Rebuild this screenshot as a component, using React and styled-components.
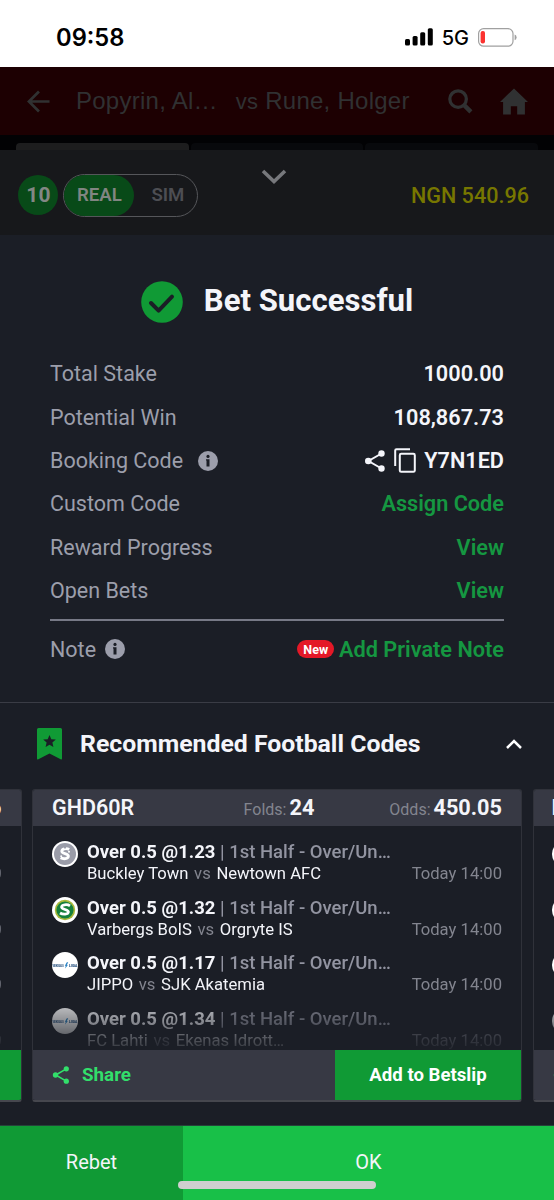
import React from 'react'
import styled, { createGlobalStyle } from 'styled-components'

const rows = [
  { label: 'Total Stake', value: '1000.00' },
  { label: 'Potential Win', value: '108,867.73' },
  { label: 'Booking Code', value: 'Y7N1ED', info: true, icons: true },
  { label: 'Custom Code', value: 'Assign Code', link: true },
  { label: 'Reward Progress', value: 'View', link: true },
  { label: 'Open Bets', value: 'View', link: true }
]

const picks = [
  { odd: '1.23', home: 'Buckley Town', away: 'Newtown AFC', logo: 'grey' },
  { odd: '1.32', home: 'Varbergs BoIS', away: 'Orgryte IS', logo: 'green' },
  { odd: '1.17', home: 'JIPPO', away: 'SJK Akatemia', logo: 'liiga' },
  { odd: '1.34', home: 'FC Lahti', away: 'Ekenas Idrott…', logo: 'liiga' }
]

const ShareIcon = ({ size }) => (
  <svg width={size} height={size} viewBox='0 0 20 22' fill='currentColor'>
    <path d='M16.5 3.5 3.5 11l13 7.5' fill='none' stroke='currentColor' strokeWidth='2' />
    <circle cx='16.5' cy='3.5' r='3.2' />
    <circle cx='3.3' cy='11' r='3.3' />
    <circle cx='16.5' cy='18.5' r='3.2' />
  </svg>
)

const CopyIcon = () => (
  <svg width='22' height='25' viewBox='0 0 22 25' fill='none' stroke='currentColor' strokeWidth='2'>
    <path d='M1.2 18V2.5Q1.2 1.2 2.5 1.2H16' />
    <rect x='5.8' y='5.8' width='15' height='18' rx='1.4' />
  </svg>
)

const InfoIcon = () => (
  <svg width='20' height='20' viewBox='0 0 20 20'>
    <circle cx='10' cy='10' r='10' fill='#9c9eab' />
    <circle cx='10' cy='5.4' r='1.6' fill='#1b1e26' />
    <path d='M8 8.2h3.5v7.2h-3V9.6H8z' fill='#1b1e26' />
  </svg>
)

const LeagueLogo = ({ type }) => (
  <svg width='26' height='26' viewBox='0 0 26 26'>
    <circle cx='13' cy='13' r='13' fill='#fff' />
    {type === 'grey' && (
      <g>
        <circle cx='13' cy='13' r='11' fill='#9a9ca8' />
        <path d='M17.2 8.4c-3-1.6-7.6-.6-7.4 2 .2 2.6 6.8 1.8 6.6 4.8-.2 2.8-5 3.2-7.8 1.6' fill='none' stroke='#fff' strokeWidth='2.8' />
        <circle cx='13' cy='6.6' r='1.1' fill='#9a9ca8' />
        <circle cx='9.2' cy='15.2' r='1' fill='#fff' />
        <circle cx='17' cy='10.8' r='1' fill='#fff' />
      </g>
    )}
    {type === 'green' && (
      <g>
        <circle cx='13' cy='13' r='10.2' fill='#a9b83a' />
        <circle cx='13' cy='13' r='8.6' fill='#16803c' />
        <path d='M18 8.8c-2.6-1.8-8.6-1.4-8.4 1.4.2 2.6 7 2 6.8 4.8-.2 2.6-5.6 2.8-8.4 1' fill='none' stroke='#fff' strokeWidth='2.8' />
      </g>
    )}
    {type === 'liiga' && (
      <g fill='#25507f'>
        <text x='.6' y='14.6' fontSize='3.4' fontWeight='900' textLength='11' lengthAdjust='spacingAndGlyphs'>VEIKKAUS</text>
        <path d='m14.6 10.4 1.6-.4-1.2 3 .8.2-2.8 3.2.7-2.5-.8-.2z' fill='#2f86c6' />
        <text x='17' y='14.6' fontSize='3.4' fontWeight='900' textLength='8.4' lengthAdjust='spacingAndGlyphs'>LIIGA</text>
      </g>
    )}
  </svg>
)

const StatusBar = () => (
  <Status>
    <Clock>09:58</Clock>
    <Signals>
      <svg width='28' height='18' viewBox='0 0 28 18'>
        <rect x='0' y='11' width='5' height='6.6' rx='1.5' />
        <rect x='7.6' y='8' width='5' height='9.6' rx='1.5' />
        <rect x='15.2' y='4.2' width='5' height='13.4' rx='1.5' />
        <rect x='22.8' y='.2' width='5' height='17.4' rx='1.5' />
      </svg>
      <Network>5G</Network>
      <svg width='39' height='19' viewBox='0 0 39 19'>
        <rect x='.6' y='.6' width='34.4' height='17.6' rx='5' fill='none' stroke='#a0a0a0' strokeWidth='1.2' />
        <rect x='2.6' y='3' width='4.4' height='12.6' rx='2' fill='#fb3230' />
        <path d='M36.6 6.6q2 .8 2 2.8t-2 2.8z' fill='#a0a0a0' />
      </svg>
    </Signals>
  </Status>
)

const CodeCard = () => (
  <Card>
    <CardHead>
      <Code>GHD60R</Code>
      <Stat>
        Folds: <b>24</b>
      </Stat>
      <Stat>
        Odds: <b>450.05</b>
      </Stat>
    </CardHead>
    <Picks>
      {picks.map((item, index) => (
        <Pick key={index}>
          <LeagueLogo type={item.logo} />
          <div className='info'>
            <Market>
              <b>Over 0.5 @{item.odd}</b> | 1st Half - Over/Un…
            </Market>
            <Teams>
              <p>
                {item.home} <i>vs</i> {item.away}
              </p>
              <span>Today 14:00</span>
            </Teams>
          </div>
        </Pick>
      ))}
    </Picks>
    <CardFoot>
      <Share>
        <ShareIcon size={18} />
        Share
      </Share>
      <AddButton>Add to Betslip</AddButton>
    </CardFoot>
  </Card>
)

// edge of the previous card in the carousel
const PrevCard = () => (
  <PrevPeek>
    <CardHead>
      <Stat>
        <b>6</b>
      </Stat>
    </CardHead>
    <Picks>
      {picks.map((item, index) => (
        <Pick key={index}>
          <Teams>
            <span>0</span>
          </Teams>
        </Pick>
      ))}
    </Picks>
    <CardFoot>
      <AddButton />
    </CardFoot>
  </PrevPeek>
)

// edge of the next card in the carousel
const NextCard = () => (
  <NextPeek>
    <CardHead>
      <Code>B</Code>
    </CardHead>
    <Picks>
      {picks.map((item, index) => (
        <Pick key={index}>
          <LeagueLogo />
        </Pick>
      ))}
    </Picks>
    <CardFoot>
      <Share>
        <ShareIcon size={18} />
      </Share>
    </CardFoot>
  </NextPeek>
)

const App = () => (
  <Page>
    <GlobalStyle />
    <StatusBar />
    <NavBar>
      <svg width='23' height='23' viewBox='0 0 24 24' fill='none' stroke='currentColor' strokeWidth='2.8'>
        <path d='M12.5 1.5 2 12l10.5 10.5M2 12h21.5' />
      </svg>
      <Match>
        <span className='home'>Popyrin, Al…</span>
        <span className='vs'>vs</span>
        <span className='away'>Rune, Holger</span>
      </Match>
      <svg width='25' height='25' viewBox='0 0 26 26' fill='none' stroke='currentColor'>
        <circle cx='10.5' cy='10.5' r='8.6' strokeWidth='3.4' />
        <path d='m16.8 16.8 7 7' strokeWidth='4.6' />
      </svg>
      <svg className='house' width='28' height='27' viewBox='0 0 29 27' fill='currentColor'>
        <path d='M14.5 0 29 14h-3.2v13h-8v-8.5h-6.6V27h-8V14H0z' />
      </svg>
    </NavBar>
    <Tabs>
      <Tab $on />
      <Tab />
      <Tab />
    </Tabs>
    <SlipHead>
      <Count>10</Count>
      <Switch>
        <Mode $on>REAL</Mode>
        <Mode>SIM</Mode>
      </Switch>
      <svg className='down' width='26' height='16' viewBox='0 0 26 16' fill='none' stroke='#77787c' strokeWidth='3.6'>
        <path d='m2 2 11 10.5L24 2' />
      </svg>
      <Balance>NGN 540.96</Balance>
    </SlipHead>
    <Title>
      <svg width='42' height='42' viewBox='0 0 42 42'>
        <circle cx='21' cy='21' r='20.8' fill='#109a35' />
        <path d='m10 22 7.6 7.6L31 15.6' fill='none' stroke='#1b1e26' strokeWidth='4' strokeLinecap='round' strokeLinejoin='round' />
      </svg>
      <span>Bet Successful</span>
    </Title>
    <Details>
      {rows.map((item, index) => (
        <Row key={index}>
          <Label $gap={15}>
            {item.label}
            {item.info && <InfoIcon />}
          </Label>
          <Value $link={item.link}>
            {item.icons && (
              <Actions>
                <ShareIcon size={22} />
                <CopyIcon />
              </Actions>
            )}
            {item.value}
          </Value>
        </Row>
      ))}
      <NoteRow>
        <Label $gap={9}>
          Note
          <InfoIcon />
        </Label>
        <Value $link>
          <Badge>New</Badge>
          Add Private Note
        </Value>
      </NoteRow>
    </Details>
    <Recommend>
      <svg width='25' height='32' viewBox='0 0 25 32'>
        <path d='M1.5 0h22Q25 0 25 1.5v29q0 1.4-1.4.8L12.5 25.6 1.4 31.3Q0 32 0 30.5v-29Q0 0 1.5 0z' fill='#109a35' />
        <path d='m12.5 7 1.8 4.2 4.5.4-3.4 3 1 4.4-3.9-2.3L8.6 19l1-4.4-3.4-3 4.5-.4z' fill='#1b1e26' />
      </svg>
      <h2>Recommended Football Codes</h2>
      <svg width='16' height='10' viewBox='0 0 16 10' fill='none' stroke='#fff' strokeWidth='2.5'>
        <path d='m1 9 7-7 7 7' />
      </svg>
    </Recommend>
    <Carousel>
      <PrevCard />
      <CodeCard />
      <NextCard />
    </Carousel>
    <Footer>
      <Rebet>Rebet</Rebet>
      <Ok>OK</Ok>
      <HomeBar />
    </Footer>
  </Page>
)

const GlobalStyle = createGlobalStyle`
  * {
    box-sizing: border-box;
  }
  body {
    margin: 0;
    background: #1b1e26;
  }
  p, h1, h2 {
    margin: 0;
  }
  svg {
    display: block;
    flex: none;
  }
`
const Page = styled.div`
  width: 554px;
  height: 1200px;
  display: flex;
  flex-direction: column;
  overflow: hidden;
  background: #1b1e26;
  color: #f4f5fa;
  font-family: Roboto, sans-serif;
  white-space: nowrap;
`
const Status = styled.div`
  height: 67px;
  flex: none;
  display: flex;
  justify-content: space-between;
  align-items: center;
  padding: 7px 37px 0 56px;
  background: #fff;
  color: #000;
  font-family: Inter, sans-serif;
`
const Clock = styled.div`
  font-size: 23.7px;
  font-weight: 600;
`
const Signals = styled.div`
  display: flex;
  align-items: center;
`
const Network = styled.span`
  margin: 2px 9px 0;
  font-size: 20px;
  font-weight: 450;
`
const NavBar = styled.div`
  height: 68px;
  flex: none;
  display: flex;
  align-items: center;
  padding: 0 26px 0 27px;
  background: #1d0002;
  color: #303132;
  .house {
    margin-left: 27px;
  }
`
const Match = styled.div`
  flex: 1;
  display: flex;
  align-items: baseline;
  margin-left: 26px;
  font-family: 'Liberation Sans', Arial, sans-serif;
  font-size: 24px;
  letter-spacing: 0.25px;
  .vs {
    margin: 0 7px 0 18px;
    font-size: 22px;
  }
`
const Tabs = styled.div`
  height: 15px;
  flex: none;
  display: flex;
  gap: 2px;
  padding: 8px 16px 0;
  background: #020204;
`
const Tab = styled.div`
  flex: 1;
  border-radius: 4px 4px 0 0;
  background: ${props => (props.$on ? '#1d1d1e' : '#08090c')};
`
const SlipHead = styled.div`
  height: 85px;
  flex: none;
  display: flex;
  align-items: center;
  padding: 5px 25px 0 18.4px;
  background: #17181b;
  .down {
    margin: -37px 0 0 63px;
  }
`
const Count = styled.div`
  width: 40px;
  height: 40px;
  display: flex;
  justify-content: center;
  align-items: center;
  border-radius: 50%;
  background: #084a18;
  color: #838784;
  font-size: 21px;
  font-weight: 700;
`
const Switch = styled.div`
  width: 135px;
  height: 43px;
  display: flex;
  margin-left: 5px;
  border: 1px solid #55565a;
  border-radius: 22px;
`
const Mode = styled.div`
  width: ${props => (props.$on ? '70px' : '63px')};
  display: flex;
  justify-content: center;
  align-items: center;
  padding-left: ${props => (props.$on ? '0' : '4px')};
  border-radius: 22px;
  background: ${props => (props.$on ? '#084a18' : 'transparent')};
  color: ${props => (props.$on ? '#818582' : '#4d4e53')};
  font-size: 18.6px;
  font-weight: 600;
`
const Balance = styled.div`
  margin-left: auto;
  color: #777700;
  font-size: 21.6px;
  font-weight: 500;
`
const Title = styled.h1`
  height: 117px;
  flex: none;
  display: flex;
  justify-content: center;
  align-items: center;
  gap: 21px;
  padding-top: 16px;
  font-size: 31.1px;
  font-weight: 700;
  span {
    padding-bottom: 3px;
  }
`
const Details = styled.div`
  height: 351px;
  flex: none;
  padding: 0.2px 50px 0;
  border-bottom: 1px solid #3a3c45;
`
const Row = styled.div`
  height: 43.35px;
  display: flex;
  justify-content: space-between;
  align-items: center;
`
const NoteRow = styled(Row)`
  height: 58px;
  margin-top: 7px;
  border-top: 2px solid #777986;
`
const Label = styled.div`
  display: flex;
  align-items: center;
  gap: ${props => props.$gap}px;
  color: #9c9eab;
  font-size: 21.5px;
`
const Value = styled.div`
  display: flex;
  align-items: center;
  color: ${props => (props.$link ? '#159741' : '#f4f5fa')};
  font-size: 21.7px;
  font-weight: 600;
`
const Actions = styled.div`
  display: flex;
  align-items: center;
  gap: 8px;
  margin-right: 8px;
`
const Badge = styled.span`
  height: 18px;
  display: flex;
  align-items: center;
  margin-right: 5px;
  padding: 0 6px;
  border-radius: 9px;
  background: #e41827;
  color: #fff;
  font-size: 12.5px;
  font-weight: 700;
`
const Recommend = styled.div`
  height: 86px;
  flex: none;
  display: flex;
  align-items: center;
  padding: 0 32px 4px 37px;
  h2 {
    flex: 1;
    margin-left: 18px;
    padding-bottom: 1px;
    font-size: 24.8px;
    font-weight: 700;
  }
`
const Carousel = styled.div`
  height: 336px;
  flex: none;
  display: flex;
  justify-content: space-between;
  align-items: flex-start;
`
const Card = styled.div`
  width: 490px;
  height: 313px;
  flex: none;
  display: flex;
  flex-direction: column;
  border: 1px solid #30323a;
  border-bottom: 2px solid #46474e;
  border-radius: 3px;
  overflow: hidden;
`
const CardHead = styled.div`
  height: 36px;
  flex: none;
  display: flex;
  align-items: center;
  padding: 0 19px 1px;
  background: #373944;
`
const Code = styled.div`
  margin-right: auto;
  font-size: 21.5px;
  font-weight: 600;
`
const Stat = styled.div`
  color: #83858f;
  font-size: 16px;
  & + & {
    margin-left: 75px;
  }
  b {
    margin-left: -1px;
    color: #f4f5fa;
    font-size: 21.7px;
    font-weight: 700;
  }
`
const Picks = styled.div`
  flex: 1;
  min-height: 0;
  padding: 14px 19px 0;
  overflow: hidden;
  mask-image: linear-gradient(#000 0, #000 160px, rgba(0, 0, 0, 0.1) 224px);
`
const Pick = styled.div`
  height: 55.7px;
  display: flex;
  align-items: flex-start;
  gap: 9px;
  .info {
    flex: 1;
  }
  svg {
    margin-top: 1px;
  }
`
const Market = styled.div`
  color: #9294a1;
  font-size: 18.5px;
  font-weight: 500;
  line-height: 24px;
  b {
    color: #f4f5fa;
    font-weight: 700;
  }
`
const Teams = styled.div`
  display: flex;
  justify-content: space-between;
  font-size: 16.65px;
  line-height: 20px;
  i {
    margin: 0 1.5px;
    color: #83858f;
    font-style: normal;
  }
  span {
    color: #83858f;
  }
`
const CardFoot = styled.div`
  height: 50px;
  flex: none;
  display: flex;
  background: #373944;
`
const Share = styled.div`
  flex: 1;
  display: flex;
  align-items: center;
  gap: 12px;
  padding: 0 0 1px 19px;
  color: #32df6b;
  font-size: 18.8px;
  font-weight: 700;
`
const AddButton = styled.div`
  width: 186px;
  display: flex;
  justify-content: center;
  align-items: center;
  padding-bottom: 1px;
  background: #109a35;
  color: #fff;
  font-size: 18.6px;
  font-weight: 700;
`
const PrevPeek = styled(Card)`
  width: 21.5px;
  border-left: 0;
  border-radius: 0 3px 3px 0;
  ${CardHead} {
    justify-content: flex-end;
    padding: 0 19px 1px 0;
  }
  ${Picks} {
    padding: 38px 19px 0 0;
  }
  ${Pick} {
    justify-content: flex-end;
  }
`
const NextPeek = styled(Card)`
  width: 21.5px;
  border-right: 0;
  border-radius: 3px 0 0 3px;
  ${CardHead} {
    padding: 0 0 1px 18px;
  }
  ${Picks} {
    padding-right: 0;
    padding-left: 18px;
  }
`
const Footer = styled.div`
  position: relative;
  height: 75px;
  flex: none;
  display: flex;
  border-top: 1px solid #26423a;
  font-size: 20px;
`
const Rebet = styled.div`
  width: 183px;
  display: flex;
  justify-content: center;
  align-items: center;
  padding-bottom: 2px;
  background: #109a35;
`
const Ok = styled(Rebet)`
  flex: 1;
  background: #18c048;
`
// sits over both footer buttons
const HomeBar = styled.div`
  position: absolute;
  left: 178px;
  bottom: 11px;
  width: 198px;
  height: 8px;
  border-radius: 4px;
  background: #cfcfcf;
`
export default App
